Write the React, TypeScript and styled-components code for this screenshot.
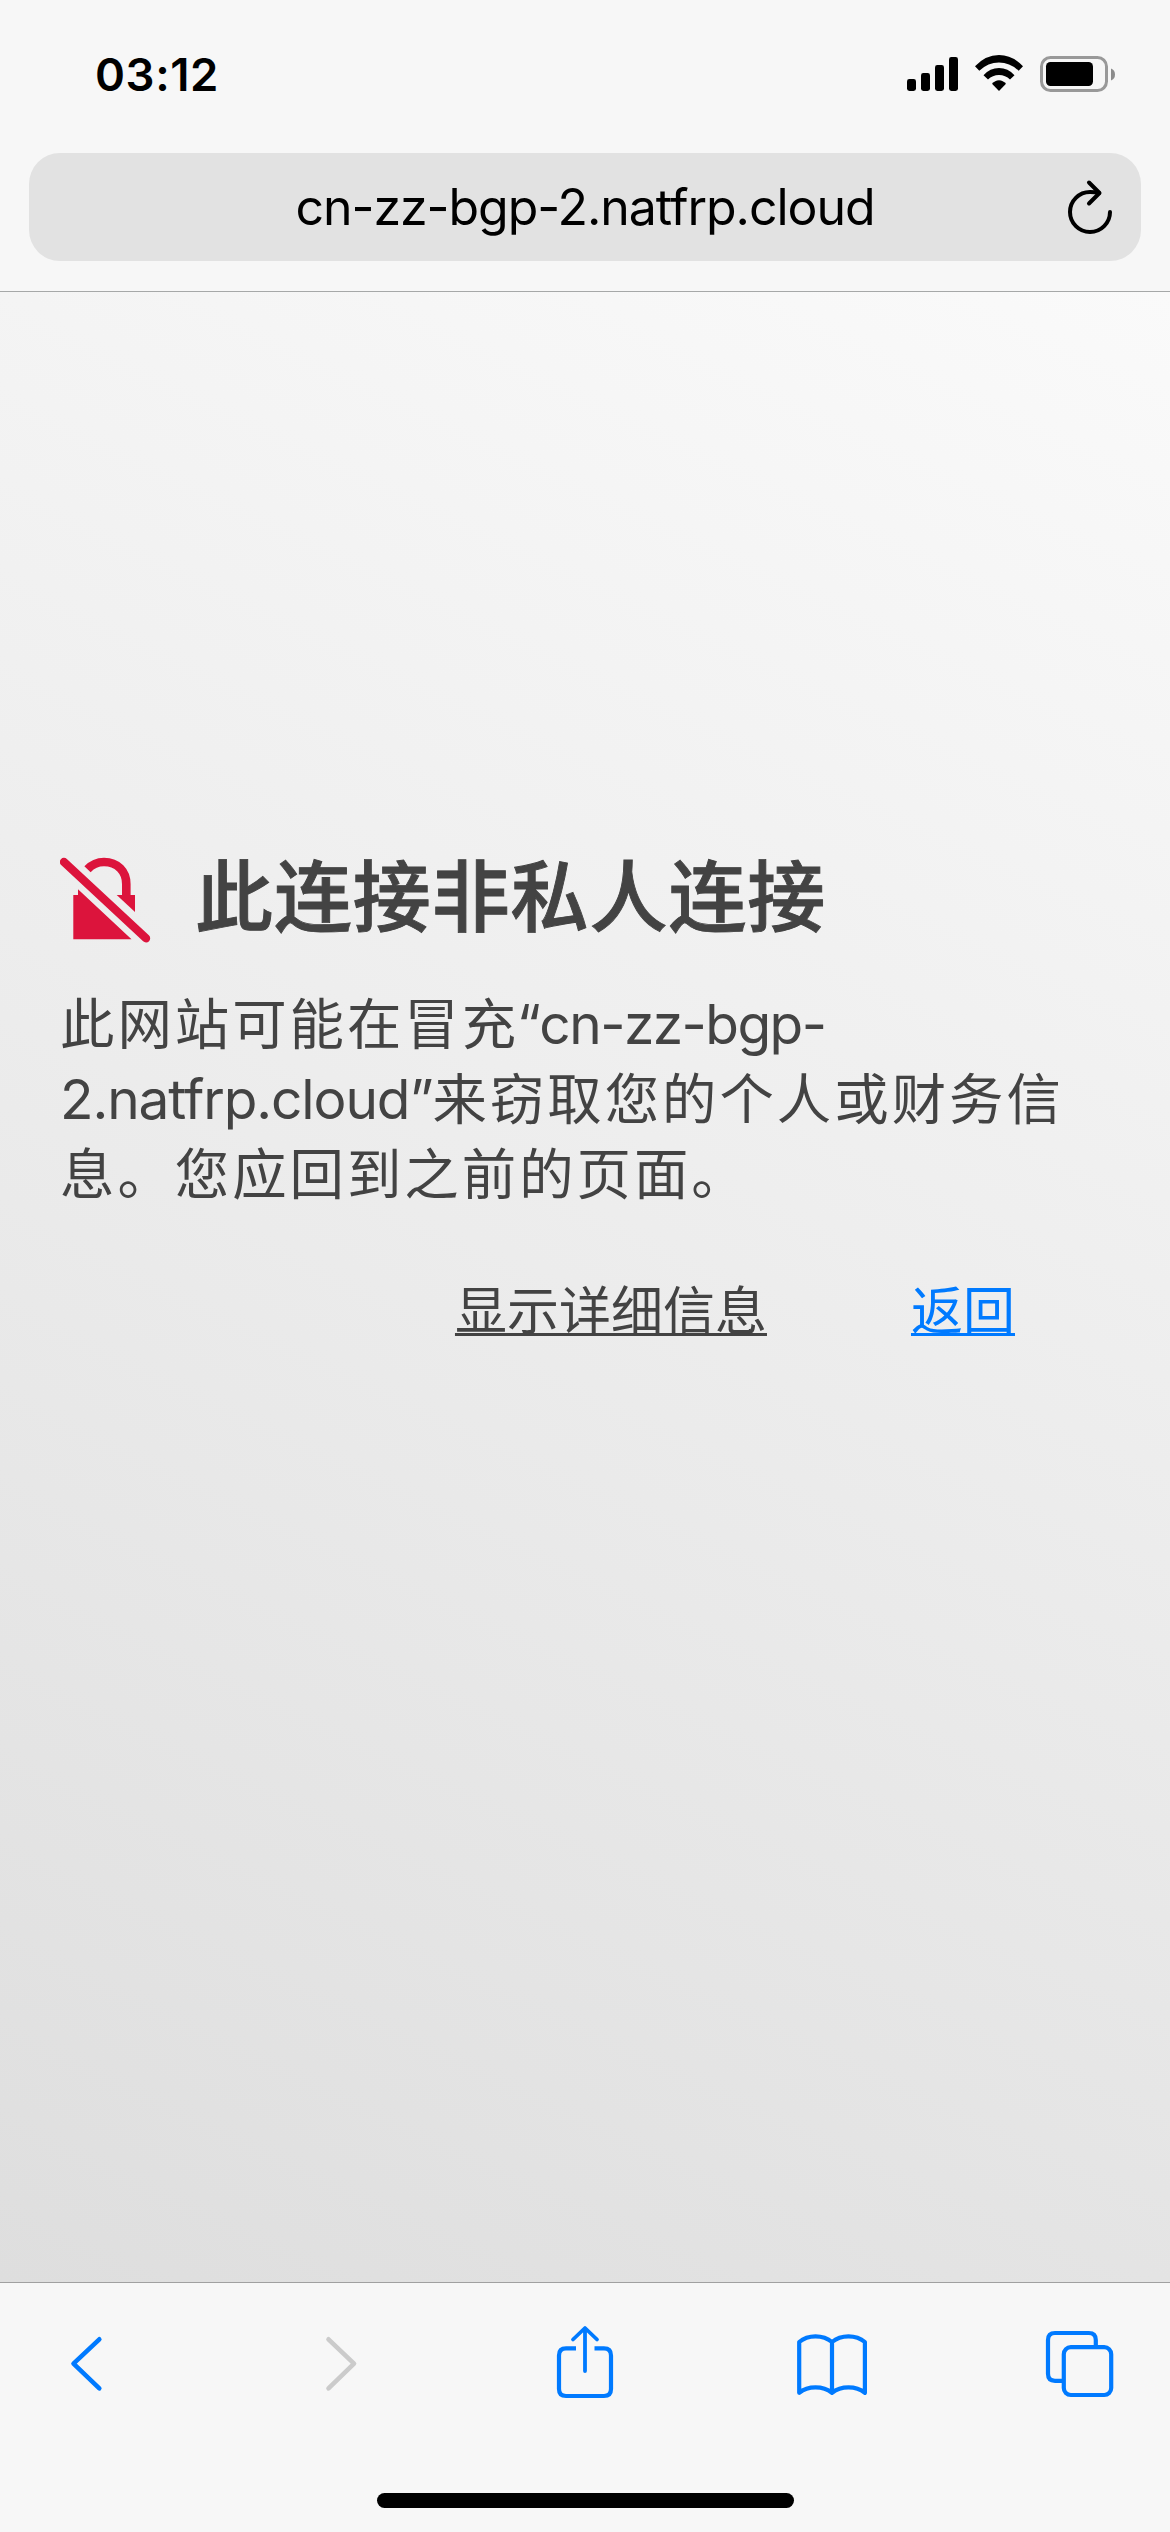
import React from 'react';
import styled, { createGlobalStyle } from 'styled-components';

const GlobalStyle = createGlobalStyle`
  * { box-sizing: border-box; }
  body {
    margin: 0;
    background: #f7f7f7;
    font-family: Inter, "Noto Sans CJK SC", sans-serif;
  }
`;

const Screen = styled.div`
  width: 1170px;
  height: 2532px;
  display: flex;
  flex-direction: column;
  overflow: hidden;
  background: #f7f7f7;
`;

const Header = styled.header`
  height: 292px;
  flex: none;
  border-bottom: 1px solid #a6a8a8;
`;

const StatusBar = styled.div`
  height: 153px;
  display: flex;
  justify-content: space-between;
  padding: 50px 54px 0 95px;
`;

const Clock = styled.time`
  font-size: 45.5px;
  line-height: 49px;
  font-weight: 600;
  letter-spacing: 0.6px;
  color: #000;
`;

const StatusIcons = styled.div`
  display: flex;
  align-items: flex-start;
  gap: 17px;
  padding-top: 5px;
`;

const AddressBar = styled.div`
  height: 108px;
  margin: 0 29px;
  padding: 0 27px;
  border-radius: 31px;
  background: #e2e2e2;
  display: grid;
  grid-template-columns: 48px 1fr 48px;
  align-items: center;
`;

const Address = styled.div`
  grid-column: 2;
  text-align: center;
  font-size: 50px;
  line-height: 60px;
  letter-spacing: -1.05px;
  color: #000;
  white-space: nowrap;
`;

const IconButton = styled.button`
  display: block;
  padding: 0;
  border: 0;
  background: none;
  line-height: 0;
  color: ${(p) => p.color || '#007aff'};
  svg { display: block; }
`;

const Page = styled.main`
  flex: 1;
  padding: 553px 60px 0;
  background: linear-gradient(25deg, #dedede, #fafafa);
  color: #434343;
`;

const TitleRow = styled.div`
  display: flex;
  align-items: flex-start;
  gap: 43px;
`;

const Title = styled.h1`
  margin: 1px 0 0;
  font-size: 78px;
  line-height: 104px;
  font-weight: 500;
  letter-spacing: 0.9px;
  -webkit-text-stroke: 0.9px #434343;
  white-space: nowrap;
`;

const Message = styled.p`
  margin: 37px 0 0;
  font-size: 54.4px;
  line-height: 75px;
  white-space: nowrap;
`;

const Line = styled.span`
  display: block;
  letter-spacing: 3px;
`;

const Host = styled.span<{ $tracking: number; $shift?: number }>`
  font-size: 55px;
  margin-left: ${(p) => p.$shift ?? 0}px;
  letter-spacing: ${(p) => p.$tracking}px;
`;

const Actions = styled.div`
  display: flex;
  justify-content: flex-end;
  gap: 144px;
  padding-right: 95px;
  margin-top: 62px;
`;

const Action = styled.a<{ $primary?: boolean }>`
  font-size: 52px;
  line-height: 76px;
  color: ${(p) => (p.$primary ? '#007aff' : '#434343')};
  text-decoration: underline;
  text-decoration-thickness: 3px;
  text-decoration-skip-ink: none;
  text-underline-offset: 3px;
`;

const Footer = styled.footer`
  height: 250px;
  flex: none;
  border-top: 1px solid #a0a0a0;
`;

const Toolbar = styled.nav`
  height: 210px;
  display: flex;
  justify-content: space-between;
  align-items: flex-start;
  padding: 40px 49px 0 49px;
`;

const HomeIndicator = styled.div`
  width: 417px;
  height: 15px;
  margin: 0 auto;
  border-radius: 8px;
  background: #000;
`;

const Signal = () => (
  <svg width="51" height="36" viewBox="0 0 51 36">
    <rect x="0" y="24" width="9" height="12" rx="2.4" />
    <rect x="14" y="18" width="9" height="18" rx="2.4" />
    <rect x="28" y="10" width="9" height="26" rx="2.4" />
    <rect x="42" y="2" width="9" height="34" rx="2.4" />
  </svg>
);

const Wifi = () => (
  <svg width="48" height="36" viewBox="975 55 48 36">
    <path d="M975 66.3 Q985.5 55 999 55 Q1012.500 55 1023 66.3 L1018.700 70.800 Q1010 62.500 999 62.500 Q988 62.500 979.300 70.800 Z" />
    <path d="M983.500 75.200 Q990 68 999 68 Q1008 68 1014.500 75.200 L1010 79.600 Q1005.500 75 999 75 Q992.500 75 988 79.600 Z" />
    <path d="M992 83.800 Q995 80.300 999 80.300 Q1003 80.300 1006 83.800 L999 91 Z" />
  </svg>
);

const Battery = () => (
  <svg width="76" height="38" viewBox="1040 55 76 38">
    <rect x="1041.500" y="57.500" width="65" height="33" rx="9" fill="none" stroke="#999" strokeWidth="3" />
    <rect x="1046" y="62" width="47" height="24" rx="4.500" />
    <path d="M1111 68.500 Q1115 70 1115 74.500 Q1115 79 1111 80.500 Z" fill="#8c8c8c" />
  </svg>
);

const Reload = () => (
  <svg width="48" height="60" viewBox="1066 177 48 60" fill="none" stroke="currentColor" strokeWidth="4" strokeLinecap="round" strokeLinejoin="round">
    <path d="M1110 212 A20 20 0 1 1 1090 192 Q1095 192 1099 193" />
    <path d="M1089 182.500 L1099.500 193 L1089 203.500" />
  </svg>
);

const BrokenLock = () => (
  <svg width="92" height="104" viewBox="60 845 92 104">
    <g fill="#dc143c">
      <path d="M73.300 895 H78 V889.300 L131.500 939.300 H73.300 Z" />
      <path d="M116.700 895 H135 V912 Z" />
    </g>
    <g fill="none" stroke="#dc143c">
      <path d="M87.500 869.300 C92 864.500 97.500 862 104 862 C117.500 862 126.300 871.500 126.300 884 V898" strokeWidth="8.600" />
      <path d="M64 862 L146 938.300" strokeWidth="8.400" strokeLinecap="round" />
    </g>
  </svg>
);

const Glyph = ({ x, children }: { x: number; children: React.ReactNode }) => (
  <svg width="80" height="80" viewBox={`${x} 2323 80 80`} fill="none" stroke="currentColor" strokeWidth="4.200" strokeLinecap="round" strokeLinejoin="round">
    {children}
  </svg>
);

export default function App() {
  return (
    <>
      <GlobalStyle />
      <Screen>
        <Header>
          <StatusBar>
            <Clock>03:12</Clock>
            <StatusIcons>
              <Signal />
              <Wifi />
              <Battery />
            </StatusIcons>
          </StatusBar>
          <AddressBar>
            <Address>cn-zz-bgp-2.natfrp.cloud</Address>
            <IconButton color="#000" aria-label="重新加载">
              <Reload />
            </IconButton>
          </AddressBar>
        </Header>
        <Page>
          <TitleRow>
            <BrokenLock />
            <Title>此连接非私人连接</Title>
          </TitleRow>
          <Message>
            <Line>此网站可能在冒充<Host $tracking={-1.55} $shift={-2.5}>“cn-zz-bgp-</Host></Line>
            <Line><Host $tracking={-1.1}>2.natfrp.cloud”</Host>来窃取您的个人或财务信</Line>
            <Line>息。您应回到之前的页面。</Line>
          </Message>
          <Actions>
            <Action>显示详细信息</Action>
            <Action $primary>返回</Action>
          </Actions>
        </Page>
        <Footer>
          <Toolbar>
            <IconButton aria-label="后退">
              <Glyph x={49}>
                <path d="M99.300 2339.300 L73.500 2363.700 L99.300 2388.300" strokeWidth="4.600" />
              </Glyph>
            </IconButton>
            <IconButton color="#cbcbcb" aria-label="前进">
              <Glyph x={297}>
                <path d="M328.500 2339.300 L354 2363.700 L328.500 2388.300" strokeWidth="4.600" />
              </Glyph>
            </IconButton>
            <IconButton aria-label="分享">
              <Glyph x={545}>
                <path d="M576 2348.400 H566 Q559 2348.400 559 2355.400 V2389 Q559 2396 566 2396 H604 Q611 2396 611 2389 V2355.400 Q611 2348.400 604 2348.400 H594.500" strokeLinecap="butt" />
                <path d="M585 2371 V2328.500 M573 2339.500 L585 2328 L597 2339.500" strokeWidth="3.800" />
              </Glyph>
            </IconButton>
            <IconButton aria-label="书签">
              <Glyph x={793}>
                <path d="M832 2342 C823 2334.500 808 2334.500 799.200 2342 V2392.800 C808 2385.500 823 2385.500 832 2392.800 C841 2385.500 856 2385.500 864.900 2392.800 V2342 C856 2334.500 841 2334.500 832 2342 V2392.800" />
              </Glyph>
            </IconButton>
            <IconButton aria-label="标签页">
              <Glyph x={1041}>
                <path d="M1095.800 2345 V2340 Q1095.800 2333 1088.800 2333 H1055 Q1048 2333 1048 2340 V2373.800 Q1048 2380.800 1055 2380.800 H1062" strokeLinecap="butt" />
                <rect x="1063.800" y="2347.200" width="47.400" height="47.800" rx="7" />
              </Glyph>
            </IconButton>
          </Toolbar>
          <HomeIndicator />
        </Footer>
      </Screen>
    </>
  );
}
